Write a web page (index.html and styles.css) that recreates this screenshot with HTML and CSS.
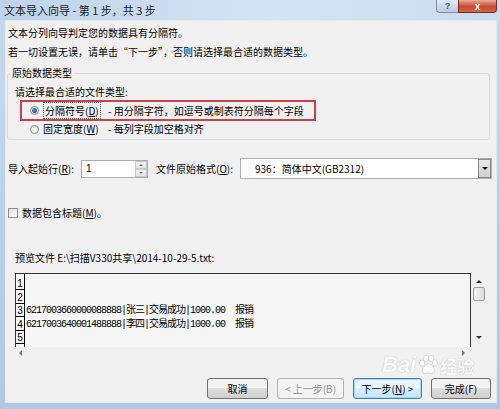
FILE: index.html
```html
<!DOCTYPE html>
<html lang="zh-CN">
  <head>
    <meta charset="UTF-8" />
    <meta name="viewport" content="width=device-width, initial-scale=1.0" />
    <title>文本导入向导</title>
    <link rel="stylesheet" href="styles.css">
  </head>

  <body>
    <div class="window">
      <div class="titlebar">
        <span class="title">文本导入向导 - 第 1 步，共 3 步</span>
        <div class="caption-btns">
          <span class="help-btn">?</span>
          <span class="close-btn">x</span>
        </div>
      </div>

      <div class="client">
        <p class="line intro">文本分列向导判定您的数据具有分隔符。</p>
        <p class="line intro">若一切设置无误，请单击“下一步”，否则请选择最合适的数据类型。</p>

        <fieldset class="group">
          <legend>原始数据类型</legend>
          <p class="line hint">请选择最合适的文件类型:</p>
          <div class="option selected">
            <span class="radio checked"></span>
            <span class="opt-label"><span class="focus">分隔符号(<u>D</u>)</span></span>
            <span class="opt-desc">- 用分隔字符，如逗号或制表符分隔每个字段</span>
          </div>
          <div class="option">
            <span class="radio"></span>
            <span class="opt-label">固定宽度(<u>W</u>)</span>
            <span class="opt-desc">- 每列字段加空格对齐</span>
          </div>
        </fieldset>

        <div class="import-row">
          <span class="field-label">导入起始行(<u>R</u>):</span>
          <div class="spin">
            <span class="spin-value">1</span>
            <div class="spin-btns">
              <span class="spin-up"></span>
              <span class="spin-down"></span>
            </div>
          </div>
          <span class="field-label origin">文件原始格式(<u>O</u>):</span>
          <div class="combo">
            <span class="combo-value">936：简体中文(GB2312)</span>
            <span class="combo-btn"><span class="arrow-down"></span></span>
          </div>
        </div>

        <div class="check-row">
          <span class="checkbox"></span>
          <span>数据包含标题(<u>M</u>)。</span>
        </div>

        <p class="line preview-label">预览文件 E:\扫描V330共享\2014-10-29-5.txt:</p>

        <div class="preview">
          <div class="pbox">
            <div class="prow first"><span class="num">1</span><span class="data"></span></div>
            <div class="prow"><span class="num">2</span><span class="data"></span></div>
            <div class="prow"><span class="num">3</span><span class="data">6217003660000088888|张三|交易成功|1000.00  报销</span></div>
            <div class="prow"><span class="num">4</span><span class="data">6217003640001488888|李四|交易成功|1000.00  报销</span></div>
            <div class="prow"><span class="num">5</span><span class="data"></span></div>
            <div class="prow tail"><span class="num"></span></div>
          </div>
          <div class="vscroll">
            <span class="arrow-up small"></span>
            <span class="thumb"></span>
            <span class="arrow-down small"></span>
          </div>
        </div>
        <div class="hscroll">
          <span class="arrow-left"></span>
          <span class="arrow-right"></span>
        </div>

        <div class="buttons">
          <button class="btn cancel">取消</button>
          <button class="btn back" disabled>&lt; 上一步(B)</button>
          <button class="btn next">下一步(<u>N</u>) &gt;</button>
          <button class="btn finish">完成(F)</button>
        </div>
      </div>

      <div class="watermark">
        <span class="wm-bai">Bai</span>
        <svg class="wm-paw" width="22" height="22" viewBox="0 0 22 22">
          <ellipse cx="5" cy="9" rx="2.6" ry="3.2" />
          <ellipse cx="9" cy="4.5" rx="2.6" ry="3.2" />
          <ellipse cx="14" cy="4.5" rx="2.6" ry="3.2" />
          <ellipse cx="18" cy="9" rx="2.6" ry="3.2" />
          <path d="M11.5 10 C7 10 4.5 16 6 18.5 C7.5 20.5 10 19 11.5 19 C13 19 15.5 20.5 17 18.5 C18.5 16 16 10 11.5 10 Z" />
        </svg>
        <span class="wm-jy">经验</span>
      </div>
    </div>
  </body>
</html>
```

FILE: styles.css
```css
body {
  margin: 0;
  font-family: "Noto Sans CJK SC", "Liberation Sans", sans-serif;
  font-size: 10px;
  color: #000;
}

.window {
  position: relative;
  display: flex;
  flex-direction: column;
  width: 500px;
  height: 409px;
  box-sizing: border-box;
  background: linear-gradient(#c6d9ee, #b2c8df);
  overflow: hidden;
}

/* title bar */
.titlebar {
  display: flex;
  justify-content: space-between;
  align-items: flex-start;
  height: 20px;
  background: linear-gradient(to right, #bdd3ea, #d4e3f3 55%, #c9dbee);
}

.title {
  padding-left: 4px;
  line-height: 20px;
  font-size: 11px;
  color: #1b1b1b;
}

.caption-btns {
  display: flex;
  margin-right: 3px;
}

.help-btn,
.close-btn {
  display: flex;
  justify-content: center;
  align-items: center;
  height: 13px;
  box-sizing: border-box;
  font-family: "Liberation Sans", sans-serif;
  font-weight: bold;
}

.help-btn {
  width: 22px;
  border: 1px solid #7d8fa3;
  border-top: none;
  border-right: none;
  border-bottom-left-radius: 4px;
  background: linear-gradient(#e2ecf6, #b9cbdd);
  color: #4a5562;
  font-size: 9px;
}

.close-btn {
  width: 39px;
  border: 1px solid #7b2a22;
  border-top: none;
  border-bottom-right-radius: 4px;
  background: linear-gradient(#e9a898, #c8472f 55%, #d4674a);
  color: #fff;
  font-size: 10px;
}

/* client area */
.client {
  flex: 1;
  display: flex;
  flex-direction: column;
  margin: 0 3px 6px 5px;
  padding: 0 4px 0 2px;
  border: 1px solid #e2eaf2;
  background-color: #f0f0f0;
}

.line {
  margin: 0;
  line-height: 14px;
  white-space: nowrap;
}

.intro {
  margin-top: 5px;
}

.group {
  margin: 7px 2px 0 -1px;
  padding: 0 0 3px 7px;
  border: 1px solid #d5dadf;
  border-radius: 3px;
}

.group legend {
  margin-left: -5px;
  padding: 0 2px;
  line-height: 14px;
}

.hint {
  margin-top: 5px;
}

.option {
  display: flex;
  align-items: center;
  height: 14px;
  margin-top: 1px;
  padding-left: 15px;
  line-height: 14px;
  white-space: nowrap;
}

.option.selected {
  width: 296px;
  height: 21px;
  box-sizing: border-box;
  margin-left: 5px;
  padding-left: 8px;
  border: 2px solid #c9424a;
}

.radio {
  position: relative;
  width: 9px;
  height: 9px;
  box-sizing: border-box;
  border: 1px solid #8c8f94;
  border-radius: 50%;
  background: radial-gradient(#ffffff, #dcdcdc);
}

.radio.checked::after {
  content: "";
  position: absolute;
  left: 1px;
  top: 1px;
  width: 5px;
  height: 5px;
  border-radius: 50%;
  background: radial-gradient(circle at 40% 40%, #5a8fc4, #123f6e);
}

.opt-label {
  width: 64px;
  margin-left: 4px;
}

.focus {
  padding: 0 1px;
  border: 1px dotted #555;
}

.opt-desc {
  margin-left: 1px;
}

/* import settings */
.import-row {
  display: flex;
  align-items: center;
  height: 21px;
  margin-top: 18px;
  white-space: nowrap;
}

.field-label {
  width: 73px;
}

.field-label.origin {
  width: 84px;
  margin-left: 8px;
}

.spin {
  display: flex;
  justify-content: space-between;
  width: 67px;
  height: 18px;
  box-sizing: border-box;
  border: 1px solid #abadb3;
  background-color: #fff;
}

.spin-value {
  padding-left: 4px;
  line-height: 16px;
  font-family: "Liberation Sans", sans-serif;
}

.spin-btns {
  display: flex;
  flex-direction: column;
  width: 12px;
}

.spin-up,
.spin-down {
  flex: 1;
  position: relative;
  border: 1px solid #c5c8cc;
  background: linear-gradient(#f6f6f6, #e2e2e2);
}

.spin-up::after,
.spin-down::after {
  content: "";
  position: absolute;
  left: 3px;
  border-left: 2px solid transparent;
  border-right: 2px solid transparent;
}

.spin-up::after {
  top: 2px;
  border-bottom: 2px solid #7a7a7a;
}

.spin-down::after {
  top: 2px;
  border-top: 2px solid #7a7a7a;
}

.combo {
  display: flex;
  justify-content: space-between;
  align-items: center;
  width: 252px;
  height: 21px;
  box-sizing: border-box;
  border: 1px solid #abadb3;
  background-color: #fff;
}

.combo-value {
  padding-left: 14px;
  line-height: 19px;
}

.combo-btn {
  display: flex;
  justify-content: center;
  align-items: center;
  width: 13px;
  height: 19px;
  box-sizing: border-box;
  border: 1px solid #8a8a8a;
  background: linear-gradient(#e8e8e8, #cfcfcf);
}

.arrow-down {
  width: 0;
  height: 0;
  border-left: 3px solid transparent;
  border-right: 3px solid transparent;
  border-top: 3px solid #111;
}

.arrow-up {
  width: 0;
  height: 0;
  border-left: 3px solid transparent;
  border-right: 3px solid transparent;
  border-bottom: 3px solid #111;
}

.check-row {
  display: flex;
  align-items: center;
  height: 14px;
  margin-top: 27px;
  line-height: 14px;
}

.checkbox {
  width: 10px;
  height: 10px;
  box-sizing: border-box;
  margin-right: 4px;
  border: 1px solid #8f8f8f;
  background: linear-gradient(135deg, #dedede, #ffffff);
}

.preview-label {
  margin-top: 31px;
  padding-left: 7px;
}

/* preview */
.preview {
  display: flex;
  margin-top: 8px;
}

.pbox {
  width: 456px;
  box-sizing: border-box;
  margin-left: 7px;
  border: 1px solid #333;
  border-bottom: none;
  background-color: #f6f6f6;
}

.prow {
  display: flex;
  height: 13.5px;
}

.prow.first {
  height: 16px;
}

.prow.tail {
  height: 3px;
}

.num {
  width: 9px;
  box-sizing: border-box;
  border-right: 1px solid #000;
  border-bottom: 1px solid #000;
  font-family: "Liberation Sans", sans-serif;
  font-size: 10px;
  line-height: 1;
  display: flex;
  justify-content: center;
  align-items: flex-end;
}

.prow.tail .num {
  border-bottom: none;
}

.data {
  padding-left: 1px;
  font-family: "Liberation Mono", "Noto Sans CJK SC", monospace;
  font-size: 10px;
  letter-spacing: -1px;
  line-height: 13px;
  white-space: pre;
  align-self: flex-end;
}

.vscroll {
  display: flex;
  flex-direction: column;
  align-items: center;
  width: 13px;
  margin-left: 1px;
}

.vscroll .arrow-up {
  margin-top: 7px;
  border-bottom-color: #333;
}

.thumb {
  width: 12px;
  height: 14px;
  box-sizing: border-box;
  margin-top: 4px;
  border: 1px solid #9a9a9a;
  border-radius: 2px;
  background: linear-gradient(to right, #f4f4f4, #dcdcdc);
}

.vscroll .arrow-down {
  margin-top: 35px;
  border-top-color: #333;
}

.hscroll {
  display: flex;
  justify-content: space-between;
  align-items: center;
  width: 456px;
  height: 12px;
  box-sizing: border-box;
  margin-left: 7px;
  padding: 0 6px 0 4px;
}

.arrow-left {
  width: 0;
  height: 0;
  border-top: 3px solid transparent;
  border-bottom: 3px solid transparent;
  border-right: 3px solid #777;
}

.arrow-right {
  width: 0;
  height: 0;
  border-top: 3px solid transparent;
  border-bottom: 3px solid transparent;
  border-left: 3px solid #777;
}

/* wizard buttons */
.buttons {
  display: flex;
  justify-content: flex-end;
  gap: 9px;
  margin-top: 19px;
  padding-right: 1px;
}

.btn {
  height: 21px;
  padding: 0;
  border: 1px solid #707070;
  border-radius: 3px;
  background: linear-gradient(#f2f2f2 45%, #dddddd 50%, #cfcfcf);
  font-family: "Noto Sans CJK SC", "Liberation Sans", sans-serif;
  font-size: 10px;
  color: #000;
}

.cancel {
  width: 61px;
}

.back {
  width: 67px;
  border-color: #adb2b5;
  background: #f4f4f4;
  color: #8a8a8a;
}

.next {
  width: 69px;
  border-color: #3c7fb1;
  background: linear-gradient(#eaf6fd 45%, #d9f0fc 50%, #bee6fd);
  box-shadow: inset 0 0 0 1px #a8d8f4;
}

.finish {
  width: 60px;
}

/* baidu watermark */
.watermark {
  position: absolute;
  left: 382px;
  top: 352px;
  display: flex;
  align-items: center;
  gap: 1px;
  color: #fff;
  opacity: 0.75;
  text-shadow: 0 0 1px rgba(90, 90, 90, 0.6);
}

.wm-bai {
  font-family: "Liberation Sans", sans-serif;
  font-size: 22px;
  font-weight: bold;
  font-style: italic;
}

.wm-paw {
  fill: #fff;
  stroke: rgba(120, 120, 120, 0.5);
  stroke-width: 0.6;
}

.wm-jy {
  font-size: 17px;
  font-weight: bold;
}
```
